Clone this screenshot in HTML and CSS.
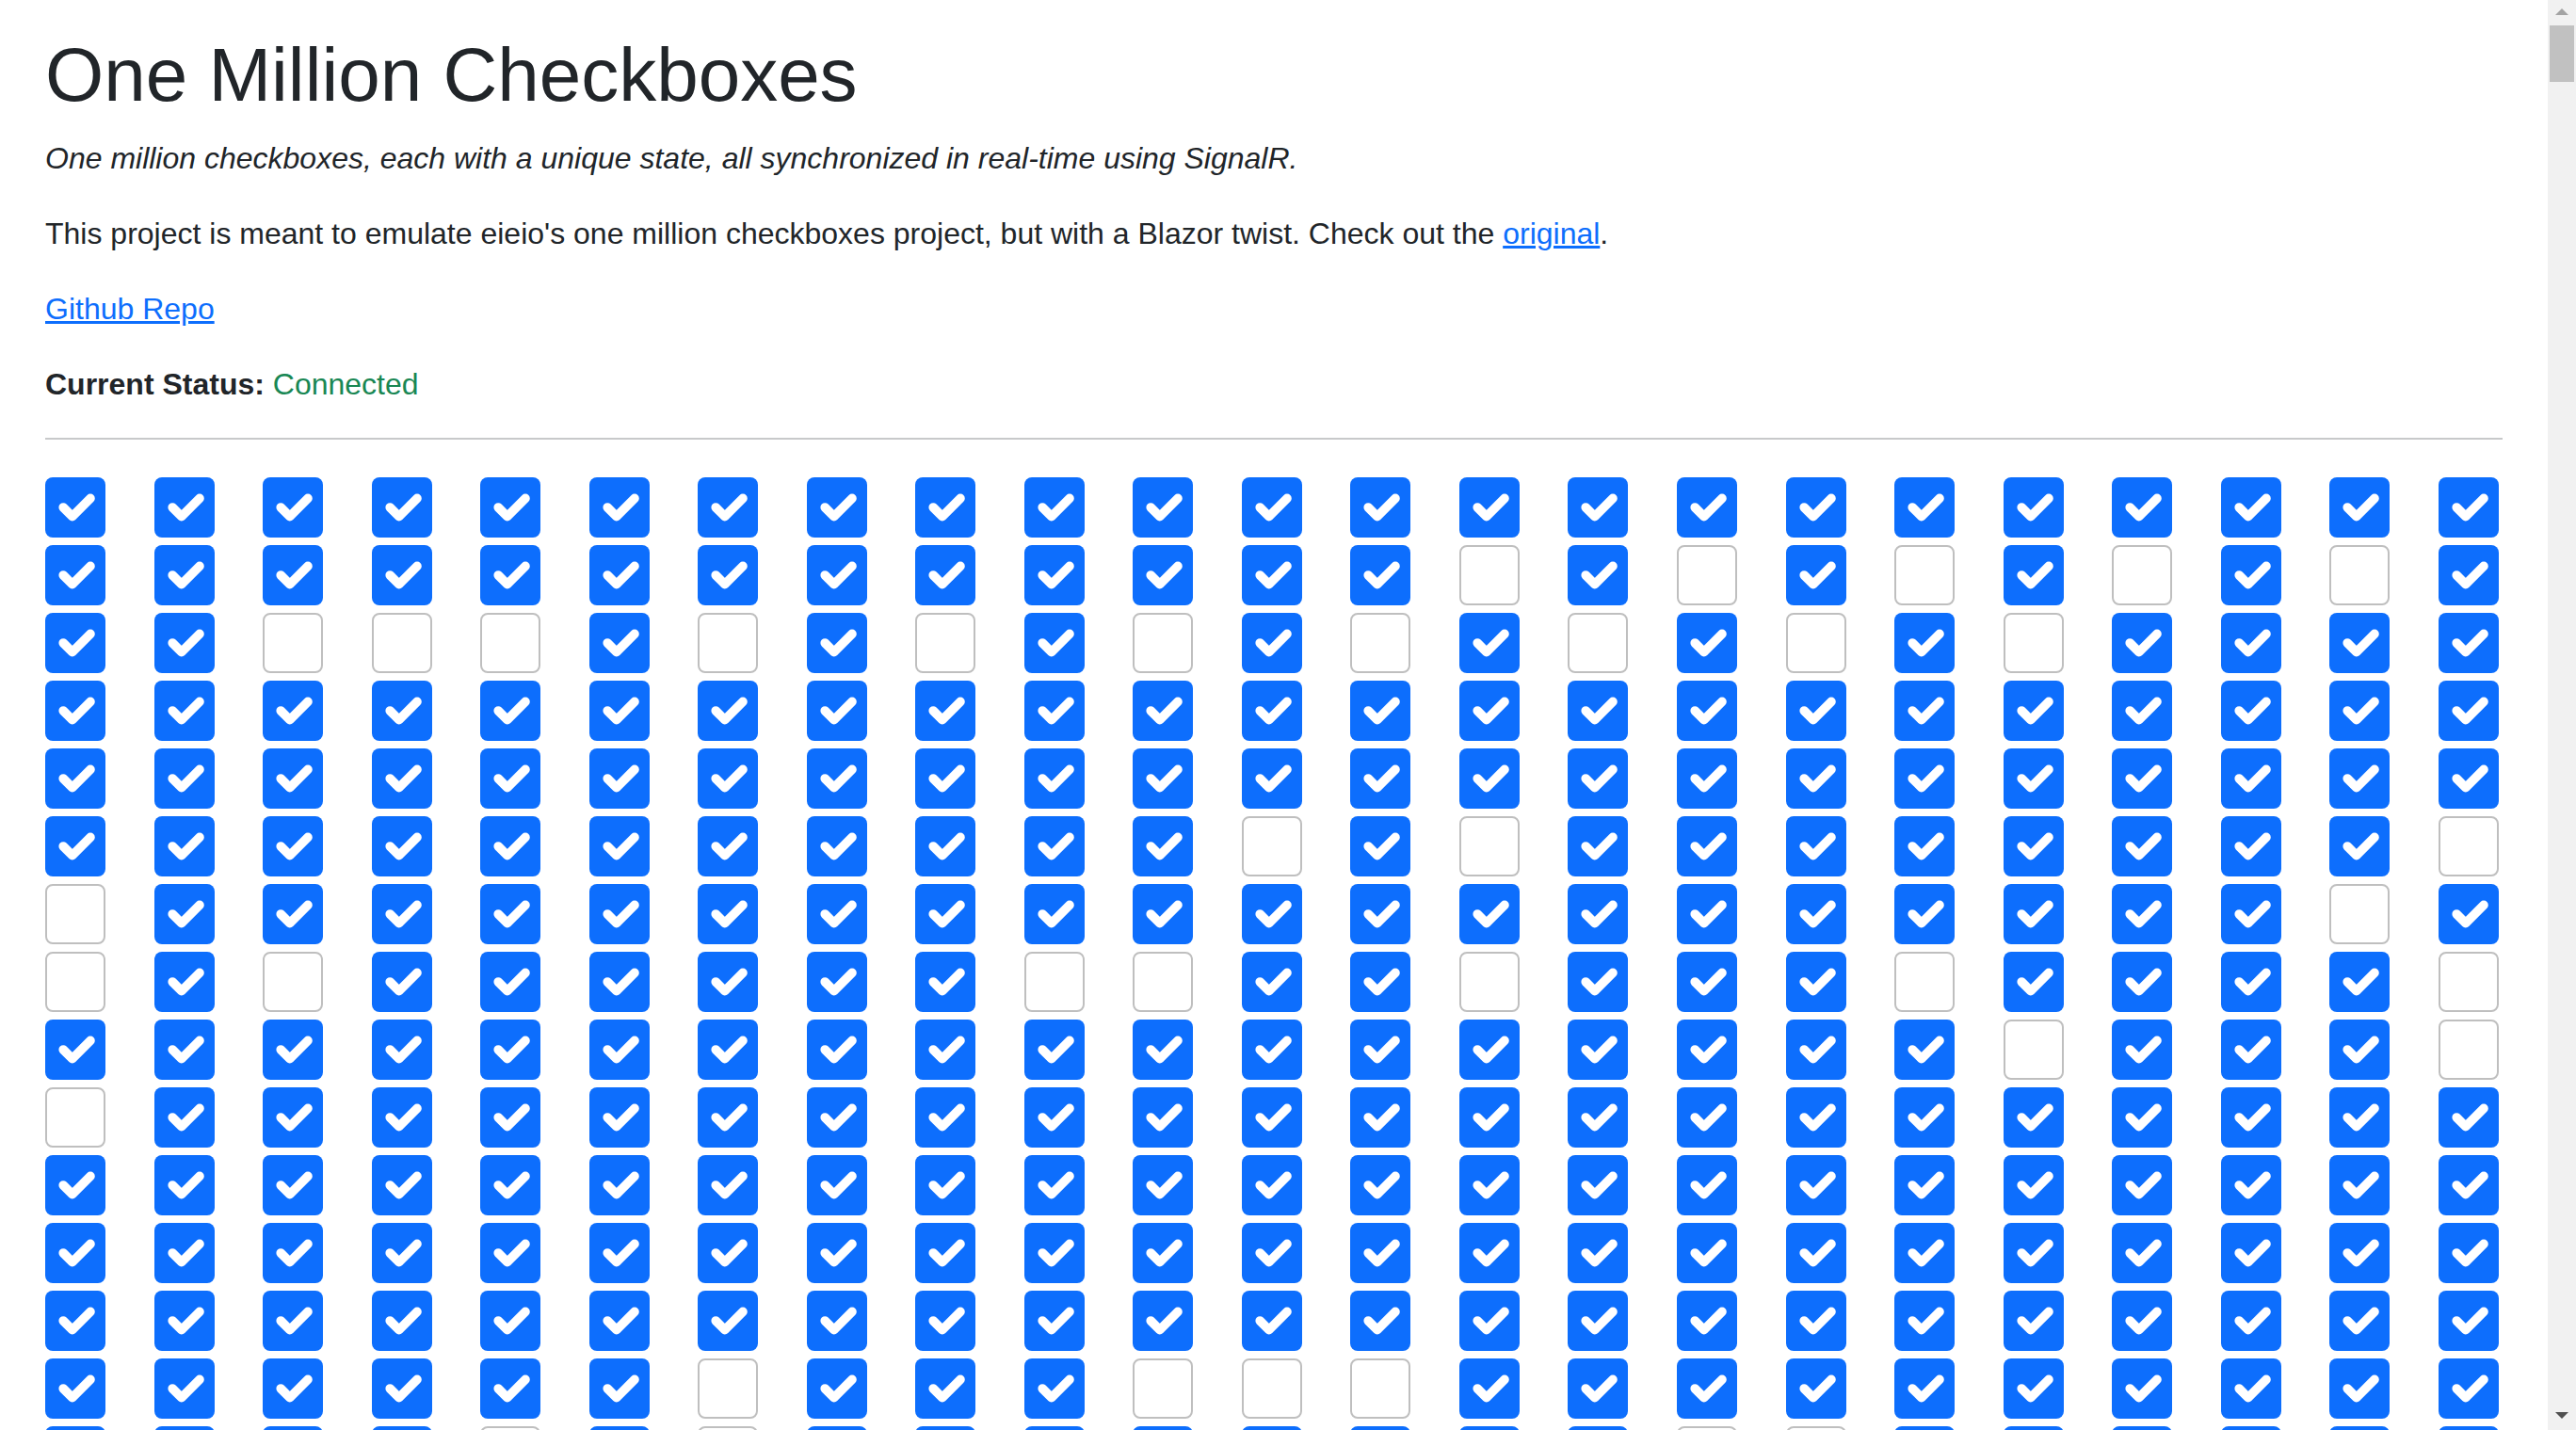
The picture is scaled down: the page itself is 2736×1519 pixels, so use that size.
FILE: index.html
```html
<!DOCTYPE html>
<html lang="en">
<head>
<meta charset="utf-8">
<title>One Million Checkboxes</title>
<link rel="stylesheet" href="styles.css">
</head>
<body>
<svg class="defs" aria-hidden="true"><symbol id="k" viewBox="0 0 20 20"><path d="m6 10 3 3 6-6"/></symbol></svg>
<main class="content">
  <h1 class="title">One Million Checkboxes</h1>
  <p class="lead"><em>One million checkboxes, each with a unique state, all synchronized in real-time using SignalR.</em></p>
  <p>This project is meant to emulate eieio's one million checkboxes project, but with a Blazor twist. Check out the <a href="#">original</a>.</p>
  <p><a href="#">Github Repo</a></p>
  <p class="status"><strong>Current Status:</strong> <span class="ok">Connected</span></p>
  <hr class="rule">
  <div class="grid">
<b class="cb"><svg><use href="#k"/></svg></b><b class="cb"><svg><use href="#k"/></svg></b><b class="cb"><svg><use href="#k"/></svg></b><b class="cb"><svg><use href="#k"/></svg></b><b class="cb"><svg><use href="#k"/></svg></b><b class="cb"><svg><use href="#k"/></svg></b><b class="cb"><svg><use href="#k"/></svg></b><b class="cb"><svg><use href="#k"/></svg></b><b class="cb"><svg><use href="#k"/></svg></b><b class="cb"><svg><use href="#k"/></svg></b><b class="cb"><svg><use href="#k"/></svg></b><b class="cb"><svg><use href="#k"/></svg></b><b class="cb"><svg><use href="#k"/></svg></b><b class="cb"><svg><use href="#k"/></svg></b><b class="cb"><svg><use href="#k"/></svg></b><b class="cb"><svg><use href="#k"/></svg></b><b class="cb"><svg><use href="#k"/></svg></b><b class="cb"><svg><use href="#k"/></svg></b><b class="cb"><svg><use href="#k"/></svg></b><b class="cb"><svg><use href="#k"/></svg></b><b class="cb"><svg><use href="#k"/></svg></b><b class="cb"><svg><use href="#k"/></svg></b><b class="cb"><svg><use href="#k"/></svg></b>
<b class="cb"><svg><use href="#k"/></svg></b><b class="cb"><svg><use href="#k"/></svg></b><b class="cb"><svg><use href="#k"/></svg></b><b class="cb"><svg><use href="#k"/></svg></b><b class="cb"><svg><use href="#k"/></svg></b><b class="cb"><svg><use href="#k"/></svg></b><b class="cb"><svg><use href="#k"/></svg></b><b class="cb"><svg><use href="#k"/></svg></b><b class="cb"><svg><use href="#k"/></svg></b><b class="cb"><svg><use href="#k"/></svg></b><b class="cb"><svg><use href="#k"/></svg></b><b class="cb"><svg><use href="#k"/></svg></b><b class="cb"><svg><use href="#k"/></svg></b><b class="cb off"></b><b class="cb"><svg><use href="#k"/></svg></b><b class="cb off"></b><b class="cb"><svg><use href="#k"/></svg></b><b class="cb off"></b><b class="cb"><svg><use href="#k"/></svg></b><b class="cb off"></b><b class="cb"><svg><use href="#k"/></svg></b><b class="cb off"></b><b class="cb"><svg><use href="#k"/></svg></b>
<b class="cb"><svg><use href="#k"/></svg></b><b class="cb"><svg><use href="#k"/></svg></b><b class="cb off"></b><b class="cb off"></b><b class="cb off"></b><b class="cb"><svg><use href="#k"/></svg></b><b class="cb off"></b><b class="cb"><svg><use href="#k"/></svg></b><b class="cb off"></b><b class="cb"><svg><use href="#k"/></svg></b><b class="cb off"></b><b class="cb"><svg><use href="#k"/></svg></b><b class="cb off"></b><b class="cb"><svg><use href="#k"/></svg></b><b class="cb off"></b><b class="cb"><svg><use href="#k"/></svg></b><b class="cb off"></b><b class="cb"><svg><use href="#k"/></svg></b><b class="cb off"></b><b class="cb"><svg><use href="#k"/></svg></b><b class="cb"><svg><use href="#k"/></svg></b><b class="cb"><svg><use href="#k"/></svg></b><b class="cb"><svg><use href="#k"/></svg></b>
<b class="cb"><svg><use href="#k"/></svg></b><b class="cb"><svg><use href="#k"/></svg></b><b class="cb"><svg><use href="#k"/></svg></b><b class="cb"><svg><use href="#k"/></svg></b><b class="cb"><svg><use href="#k"/></svg></b><b class="cb"><svg><use href="#k"/></svg></b><b class="cb"><svg><use href="#k"/></svg></b><b class="cb"><svg><use href="#k"/></svg></b><b class="cb"><svg><use href="#k"/></svg></b><b class="cb"><svg><use href="#k"/></svg></b><b class="cb"><svg><use href="#k"/></svg></b><b class="cb"><svg><use href="#k"/></svg></b><b class="cb"><svg><use href="#k"/></svg></b><b class="cb"><svg><use href="#k"/></svg></b><b class="cb"><svg><use href="#k"/></svg></b><b class="cb"><svg><use href="#k"/></svg></b><b class="cb"><svg><use href="#k"/></svg></b><b class="cb"><svg><use href="#k"/></svg></b><b class="cb"><svg><use href="#k"/></svg></b><b class="cb"><svg><use href="#k"/></svg></b><b class="cb"><svg><use href="#k"/></svg></b><b class="cb"><svg><use href="#k"/></svg></b><b class="cb"><svg><use href="#k"/></svg></b>
<b class="cb"><svg><use href="#k"/></svg></b><b class="cb"><svg><use href="#k"/></svg></b><b class="cb"><svg><use href="#k"/></svg></b><b class="cb"><svg><use href="#k"/></svg></b><b class="cb"><svg><use href="#k"/></svg></b><b class="cb"><svg><use href="#k"/></svg></b><b class="cb"><svg><use href="#k"/></svg></b><b class="cb"><svg><use href="#k"/></svg></b><b class="cb"><svg><use href="#k"/></svg></b><b class="cb"><svg><use href="#k"/></svg></b><b class="cb"><svg><use href="#k"/></svg></b><b class="cb"><svg><use href="#k"/></svg></b><b class="cb"><svg><use href="#k"/></svg></b><b class="cb"><svg><use href="#k"/></svg></b><b class="cb"><svg><use href="#k"/></svg></b><b class="cb"><svg><use href="#k"/></svg></b><b class="cb"><svg><use href="#k"/></svg></b><b class="cb"><svg><use href="#k"/></svg></b><b class="cb"><svg><use href="#k"/></svg></b><b class="cb"><svg><use href="#k"/></svg></b><b class="cb"><svg><use href="#k"/></svg></b><b class="cb"><svg><use href="#k"/></svg></b><b class="cb"><svg><use href="#k"/></svg></b>
<b class="cb"><svg><use href="#k"/></svg></b><b class="cb"><svg><use href="#k"/></svg></b><b class="cb"><svg><use href="#k"/></svg></b><b class="cb"><svg><use href="#k"/></svg></b><b class="cb"><svg><use href="#k"/></svg></b><b class="cb"><svg><use href="#k"/></svg></b><b class="cb"><svg><use href="#k"/></svg></b><b class="cb"><svg><use href="#k"/></svg></b><b class="cb"><svg><use href="#k"/></svg></b><b class="cb"><svg><use href="#k"/></svg></b><b class="cb"><svg><use href="#k"/></svg></b><b class="cb off"></b><b class="cb"><svg><use href="#k"/></svg></b><b class="cb off"></b><b class="cb"><svg><use href="#k"/></svg></b><b class="cb"><svg><use href="#k"/></svg></b><b class="cb"><svg><use href="#k"/></svg></b><b class="cb"><svg><use href="#k"/></svg></b><b class="cb"><svg><use href="#k"/></svg></b><b class="cb"><svg><use href="#k"/></svg></b><b class="cb"><svg><use href="#k"/></svg></b><b class="cb"><svg><use href="#k"/></svg></b><b class="cb off"></b>
<b class="cb off"></b><b class="cb"><svg><use href="#k"/></svg></b><b class="cb"><svg><use href="#k"/></svg></b><b class="cb"><svg><use href="#k"/></svg></b><b class="cb"><svg><use href="#k"/></svg></b><b class="cb"><svg><use href="#k"/></svg></b><b class="cb"><svg><use href="#k"/></svg></b><b class="cb"><svg><use href="#k"/></svg></b><b class="cb"><svg><use href="#k"/></svg></b><b class="cb"><svg><use href="#k"/></svg></b><b class="cb"><svg><use href="#k"/></svg></b><b class="cb"><svg><use href="#k"/></svg></b><b class="cb"><svg><use href="#k"/></svg></b><b class="cb"><svg><use href="#k"/></svg></b><b class="cb"><svg><use href="#k"/></svg></b><b class="cb"><svg><use href="#k"/></svg></b><b class="cb"><svg><use href="#k"/></svg></b><b class="cb"><svg><use href="#k"/></svg></b><b class="cb"><svg><use href="#k"/></svg></b><b class="cb"><svg><use href="#k"/></svg></b><b class="cb"><svg><use href="#k"/></svg></b><b class="cb off"></b><b class="cb"><svg><use href="#k"/></svg></b>
<b class="cb off"></b><b class="cb"><svg><use href="#k"/></svg></b><b class="cb off"></b><b class="cb"><svg><use href="#k"/></svg></b><b class="cb"><svg><use href="#k"/></svg></b><b class="cb"><svg><use href="#k"/></svg></b><b class="cb"><svg><use href="#k"/></svg></b><b class="cb"><svg><use href="#k"/></svg></b><b class="cb"><svg><use href="#k"/></svg></b><b class="cb off"></b><b class="cb off"></b><b class="cb"><svg><use href="#k"/></svg></b><b class="cb"><svg><use href="#k"/></svg></b><b class="cb off"></b><b class="cb"><svg><use href="#k"/></svg></b><b class="cb"><svg><use href="#k"/></svg></b><b class="cb"><svg><use href="#k"/></svg></b><b class="cb off"></b><b class="cb"><svg><use href="#k"/></svg></b><b class="cb"><svg><use href="#k"/></svg></b><b class="cb"><svg><use href="#k"/></svg></b><b class="cb"><svg><use href="#k"/></svg></b><b class="cb off"></b>
<b class="cb"><svg><use href="#k"/></svg></b><b class="cb"><svg><use href="#k"/></svg></b><b class="cb"><svg><use href="#k"/></svg></b><b class="cb"><svg><use href="#k"/></svg></b><b class="cb"><svg><use href="#k"/></svg></b><b class="cb"><svg><use href="#k"/></svg></b><b class="cb"><svg><use href="#k"/></svg></b><b class="cb"><svg><use href="#k"/></svg></b><b class="cb"><svg><use href="#k"/></svg></b><b class="cb"><svg><use href="#k"/></svg></b><b class="cb"><svg><use href="#k"/></svg></b><b class="cb"><svg><use href="#k"/></svg></b><b class="cb"><svg><use href="#k"/></svg></b><b class="cb"><svg><use href="#k"/></svg></b><b class="cb"><svg><use href="#k"/></svg></b><b class="cb"><svg><use href="#k"/></svg></b><b class="cb"><svg><use href="#k"/></svg></b><b class="cb"><svg><use href="#k"/></svg></b><b class="cb off"></b><b class="cb"><svg><use href="#k"/></svg></b><b class="cb"><svg><use href="#k"/></svg></b><b class="cb"><svg><use href="#k"/></svg></b><b class="cb off"></b>
<b class="cb off"></b><b class="cb"><svg><use href="#k"/></svg></b><b class="cb"><svg><use href="#k"/></svg></b><b class="cb"><svg><use href="#k"/></svg></b><b class="cb"><svg><use href="#k"/></svg></b><b class="cb"><svg><use href="#k"/></svg></b><b class="cb"><svg><use href="#k"/></svg></b><b class="cb"><svg><use href="#k"/></svg></b><b class="cb"><svg><use href="#k"/></svg></b><b class="cb"><svg><use href="#k"/></svg></b><b class="cb"><svg><use href="#k"/></svg></b><b class="cb"><svg><use href="#k"/></svg></b><b class="cb"><svg><use href="#k"/></svg></b><b class="cb"><svg><use href="#k"/></svg></b><b class="cb"><svg><use href="#k"/></svg></b><b class="cb"><svg><use href="#k"/></svg></b><b class="cb"><svg><use href="#k"/></svg></b><b class="cb"><svg><use href="#k"/></svg></b><b class="cb"><svg><use href="#k"/></svg></b><b class="cb"><svg><use href="#k"/></svg></b><b class="cb"><svg><use href="#k"/></svg></b><b class="cb"><svg><use href="#k"/></svg></b><b class="cb"><svg><use href="#k"/></svg></b>
<b class="cb"><svg><use href="#k"/></svg></b><b class="cb"><svg><use href="#k"/></svg></b><b class="cb"><svg><use href="#k"/></svg></b><b class="cb"><svg><use href="#k"/></svg></b><b class="cb"><svg><use href="#k"/></svg></b><b class="cb"><svg><use href="#k"/></svg></b><b class="cb"><svg><use href="#k"/></svg></b><b class="cb"><svg><use href="#k"/></svg></b><b class="cb"><svg><use href="#k"/></svg></b><b class="cb"><svg><use href="#k"/></svg></b><b class="cb"><svg><use href="#k"/></svg></b><b class="cb"><svg><use href="#k"/></svg></b><b class="cb"><svg><use href="#k"/></svg></b><b class="cb"><svg><use href="#k"/></svg></b><b class="cb"><svg><use href="#k"/></svg></b><b class="cb"><svg><use href="#k"/></svg></b><b class="cb"><svg><use href="#k"/></svg></b><b class="cb"><svg><use href="#k"/></svg></b><b class="cb"><svg><use href="#k"/></svg></b><b class="cb"><svg><use href="#k"/></svg></b><b class="cb"><svg><use href="#k"/></svg></b><b class="cb"><svg><use href="#k"/></svg></b><b class="cb"><svg><use href="#k"/></svg></b>
<b class="cb"><svg><use href="#k"/></svg></b><b class="cb"><svg><use href="#k"/></svg></b><b class="cb"><svg><use href="#k"/></svg></b><b class="cb"><svg><use href="#k"/></svg></b><b class="cb"><svg><use href="#k"/></svg></b><b class="cb"><svg><use href="#k"/></svg></b><b class="cb"><svg><use href="#k"/></svg></b><b class="cb"><svg><use href="#k"/></svg></b><b class="cb"><svg><use href="#k"/></svg></b><b class="cb"><svg><use href="#k"/></svg></b><b class="cb"><svg><use href="#k"/></svg></b><b class="cb"><svg><use href="#k"/></svg></b><b class="cb"><svg><use href="#k"/></svg></b><b class="cb"><svg><use href="#k"/></svg></b><b class="cb"><svg><use href="#k"/></svg></b><b class="cb"><svg><use href="#k"/></svg></b><b class="cb"><svg><use href="#k"/></svg></b><b class="cb"><svg><use href="#k"/></svg></b><b class="cb"><svg><use href="#k"/></svg></b><b class="cb"><svg><use href="#k"/></svg></b><b class="cb"><svg><use href="#k"/></svg></b><b class="cb"><svg><use href="#k"/></svg></b><b class="cb"><svg><use href="#k"/></svg></b>
<b class="cb"><svg><use href="#k"/></svg></b><b class="cb"><svg><use href="#k"/></svg></b><b class="cb"><svg><use href="#k"/></svg></b><b class="cb"><svg><use href="#k"/></svg></b><b class="cb"><svg><use href="#k"/></svg></b><b class="cb"><svg><use href="#k"/></svg></b><b class="cb"><svg><use href="#k"/></svg></b><b class="cb"><svg><use href="#k"/></svg></b><b class="cb"><svg><use href="#k"/></svg></b><b class="cb"><svg><use href="#k"/></svg></b><b class="cb"><svg><use href="#k"/></svg></b><b class="cb"><svg><use href="#k"/></svg></b><b class="cb"><svg><use href="#k"/></svg></b><b class="cb"><svg><use href="#k"/></svg></b><b class="cb"><svg><use href="#k"/></svg></b><b class="cb"><svg><use href="#k"/></svg></b><b class="cb"><svg><use href="#k"/></svg></b><b class="cb"><svg><use href="#k"/></svg></b><b class="cb"><svg><use href="#k"/></svg></b><b class="cb"><svg><use href="#k"/></svg></b><b class="cb"><svg><use href="#k"/></svg></b><b class="cb"><svg><use href="#k"/></svg></b><b class="cb"><svg><use href="#k"/></svg></b>
<b class="cb"><svg><use href="#k"/></svg></b><b class="cb"><svg><use href="#k"/></svg></b><b class="cb"><svg><use href="#k"/></svg></b><b class="cb"><svg><use href="#k"/></svg></b><b class="cb"><svg><use href="#k"/></svg></b><b class="cb"><svg><use href="#k"/></svg></b><b class="cb off"></b><b class="cb"><svg><use href="#k"/></svg></b><b class="cb"><svg><use href="#k"/></svg></b><b class="cb"><svg><use href="#k"/></svg></b><b class="cb off"></b><b class="cb off"></b><b class="cb off"></b><b class="cb"><svg><use href="#k"/></svg></b><b class="cb"><svg><use href="#k"/></svg></b><b class="cb"><svg><use href="#k"/></svg></b><b class="cb"><svg><use href="#k"/></svg></b><b class="cb"><svg><use href="#k"/></svg></b><b class="cb"><svg><use href="#k"/></svg></b><b class="cb"><svg><use href="#k"/></svg></b><b class="cb"><svg><use href="#k"/></svg></b><b class="cb"><svg><use href="#k"/></svg></b><b class="cb"><svg><use href="#k"/></svg></b>
<b class="cb"><svg><use href="#k"/></svg></b><b class="cb"><svg><use href="#k"/></svg></b><b class="cb"><svg><use href="#k"/></svg></b><b class="cb"><svg><use href="#k"/></svg></b><b class="cb off"></b><b class="cb"><svg><use href="#k"/></svg></b><b class="cb off"></b><b class="cb"><svg><use href="#k"/></svg></b><b class="cb"><svg><use href="#k"/></svg></b><b class="cb"><svg><use href="#k"/></svg></b><b class="cb"><svg><use href="#k"/></svg></b><b class="cb"><svg><use href="#k"/></svg></b><b class="cb"><svg><use href="#k"/></svg></b><b class="cb"><svg><use href="#k"/></svg></b><b class="cb"><svg><use href="#k"/></svg></b><b class="cb off"></b><b class="cb off"></b><b class="cb"><svg><use href="#k"/></svg></b><b class="cb"><svg><use href="#k"/></svg></b><b class="cb"><svg><use href="#k"/></svg></b><b class="cb"><svg><use href="#k"/></svg></b><b class="cb"><svg><use href="#k"/></svg></b><b class="cb"><svg><use href="#k"/></svg></b>
  </div>
</main>
<div class="scrollbar" aria-hidden="true">
  <div class="sb-arrow sb-up"></div>
  <div class="sb-thumb"></div>
  <div class="sb-track"></div>
  <div class="sb-arrow sb-down"></div>
</div>
</body>
</html>
```

FILE: styles.css
```css
html, body {
  margin: 0;
  height: 100%;
}

body {
  display: flex;
  overflow: hidden;
  background: #fff;
  color: #212529;
  font-family: "Liberation Sans", Arial, sans-serif;
  font-size: 32px;
  line-height: 1.5;
}

.defs {
  width: 0;
  height: 0;
  position: absolute;
}

.content {
  flex: 1;
  min-width: 0;
  padding: 32px 48px 0;
  overflow: hidden;
}

.title {
  margin: 0 0 16px;
  font-size: 80px;
  font-weight: 500;
  line-height: 1.2;
}

p {
  margin: 0 0 32px;
}

a {
  color: #0d6efd;
  text-decoration: underline;
}

.status strong {
  font-weight: 700;
}

.ok {
  color: #198754;
}

.rule {
  margin: 33px 0 40px;
  border: 0;
  border-top: 2px solid #c8c9ca;
  height: 0;
}

.grid {
  display: grid;
  grid-template-columns: repeat(23, 64px);
  column-gap: 51.545px;
  row-gap: 8px;
}

.cb {
  display: block;
  width: 64px;
  height: 64px;
  box-sizing: border-box;
  border-radius: 8px;
  background: #0d6efd;
}

.cb svg {
  display: block;
  width: 64px;
  height: 64px;
  fill: none;
  stroke: #fff;
  stroke-width: 3;
  stroke-linecap: round;
  stroke-linejoin: round;
}

.cb.off {
  background: #fff;
  border: 2px solid #bfbfbf;
}

.scrollbar {
  width: 30px;
  flex: none;
  display: flex;
  flex-direction: column;
  align-items: center;
  background: #f1f1f1;
}

.sb-arrow {
  width: 0;
  height: 0;
  border-left: 7px solid transparent;
  border-right: 7px solid transparent;
}

.sb-up {
  margin-top: 9px;
  border-bottom: 7px solid #a3a3a3;
}

.sb-thumb {
  margin-top: 11px;
  width: 26px;
  height: 60px;
  background: #c1c1c1;
}

.sb-track {
  flex: 1;
}

.sb-down {
  margin-bottom: 12px;
  border-top: 7px solid #505050;
}
```
